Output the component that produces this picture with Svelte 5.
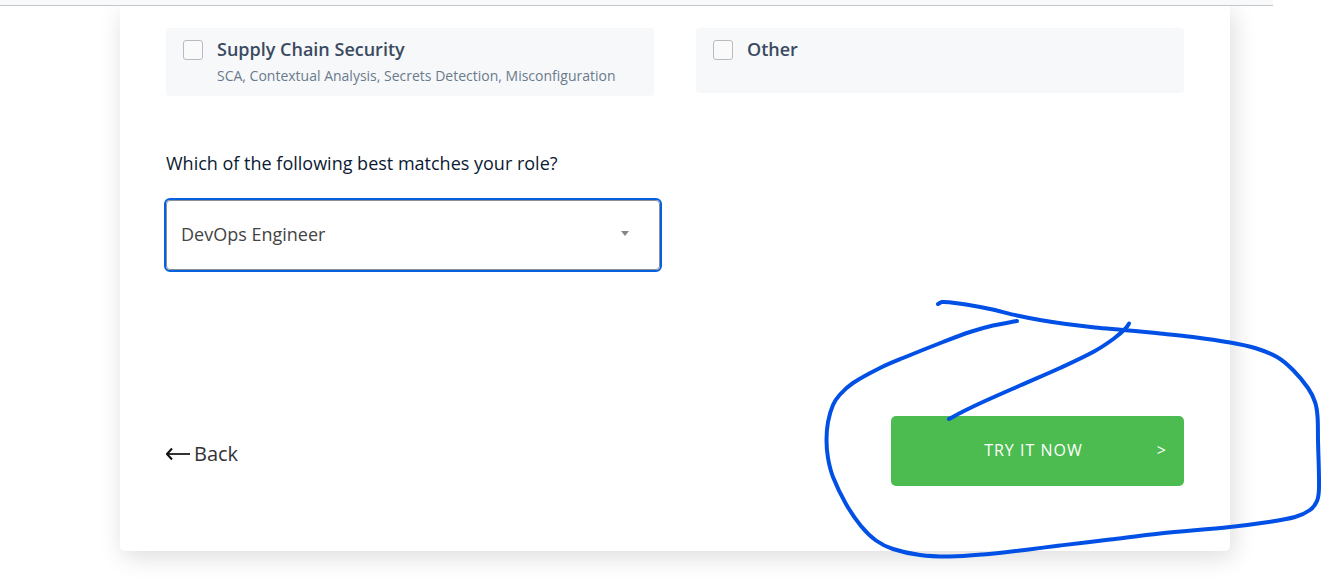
<script>
  let options = $state([
    {
      id: 'supply-chain',
      title: 'Supply Chain Security',
      detail: 'SCA, Contextual Analysis, Secrets Detection, Misconfiguration',
      checked: false
    },
    { id: 'other', title: 'Other', detail: '', checked: false }
  ]);
  const roles = ['DevOps Engineer', 'Developer', 'Security Engineer', 'Architect'];
  let role = $state('DevOps Engineer');

  // Pen strokes, each a list of points joined by a smooth curve
  const strokes = [
    [
      [938, 304], [942, 302], [951, 302.5], [966, 304.5], [990, 309], [1017, 315.5],
      [1040, 320], [1066, 324], [1095, 327.5], [1123, 330], [1160, 333.5], [1193, 337],
      [1230, 342.5], [1255, 348], [1277, 357], [1293, 370], [1308, 388], [1315, 402],
      [1317.5, 416], [1318, 440], [1319, 488], [1317, 501], [1310, 510], [1295, 517],
      [1265, 522.5], [1230, 527], [1160, 533.5], [1110, 539.5], [1060, 545.5],
      [1020, 550.5], [983, 554.5], [950, 556.5], [920, 555], [893, 549], [876, 540.5],
      [861, 526], [846, 504], [833, 477], [828, 458], [826.5, 440], [828, 422],
      [833, 405], [840, 394.5], [853, 383], [880, 368], [903, 358], [943, 342],
      [970, 332], [993, 325.5], [1017, 321]
    ],
    [
      [1129, 323.5], [1126, 328], [1114, 338.5], [1094, 351.5], [1060, 368],
      [1020, 385.5], [985, 401], [963, 411.5], [949, 419]
    ]
  ];

  function curve(points) {
    let d = `M${points[0]}`;
    for (let i = 0; i < points.length - 1; i++) {
      const b = points[i];
      const c = points[i + 1];
      const a = points[i - 1] ?? b;
      const e = points[i + 2] ?? c;
      const span = Math.hypot(c[0] - b[0], c[1] - b[1]) / 3;
      const before = Math.hypot(c[0] - a[0], c[1] - a[1]);
      const after = Math.hypot(e[0] - b[0], e[1] - b[1]);
      const p = [0, 1].map((k) => b[k] + ((c[k] - a[k]) / before) * span);
      const q = [0, 1].map((k) => c[k] - ((e[k] - b[k]) / after) * span);
      d += `C${p} ${q} ${c}`;
    }
    return d;
  }
</script>

<div class="page">
  <div class="topbar"><div class="topbar-fill"></div></div>

  <form class="card" onsubmit={(e) => e.preventDefault()}>
    <div class="options">
      {#each options as option (option.id)}
        <label class="option" for={option.id}>
          <input id={option.id} type="checkbox" bind:checked={option.checked} />
          <span class="text">
            <span class="title">{option.title}</span>
            {#if option.detail}
              <span class="detail">{option.detail}</span>
            {/if}
          </span>
        </label>
      {/each}
    </div>

    <label class="question" for="role">Which of the following best matches your role?</label>
    <div class="select">
      <select id="role" bind:value={role}>
        {#each roles as name}
          <option value={name}>{name}</option>
        {/each}
      </select>
      <svg class="caret" width="8" height="5" viewBox="0 0 8 5" aria-hidden="true">
        <path d="M0 0h8L4 5z" fill="#888" />
      </svg>
    </div>

    <div class="actions">
      <a class="back" href="#back">
        <svg width="24" height="14" viewBox="0 0 24 14" aria-hidden="true">
          <path d="M1 7H24" fill="none" stroke="#333" stroke-width="2" />
          <path d="M6 1.5L1 7L6 12.5" fill="none" stroke="#111" stroke-width="2" />
        </svg>
        <span>Back</span>
      </a>
      <button class="submit" type="submit">
        <span class="submit-label">TRY IT NOW</span>
        <span>&gt;</span>
      </button>
    </div>
  </form>

  <svg class="ink" width="520" height="280" viewBox="810 290 520 280" aria-hidden="true">
    {#each strokes as points}
      <path d={curve(points)} />
    {/each}
  </svg>
</div>

<style>
  :global(body) {
    margin: 0;
    background: #fff;
  }

  .page {
    position: relative;
    overflow: hidden;
    padding-bottom: 32px;
    font-family: 'Open Sans', 'Noto Sans', sans-serif;
  }

  .topbar {
    position: relative;
    z-index: 1;
    padding-right: 49px;
    background: #fff;
  }

  .topbar-fill {
    height: 5px;
    background: #f8f9fb;
    border-bottom: 1px solid #c6c6c8;
  }

  .card {
    margin: 0 92px 0 120px;
    padding: 22px 46px 65px;
    background: #fff;
    border-radius: 0 0 5px 5px;
    box-shadow: 3px 6px 24px rgba(0, 0, 0, 0.14);
  }

  .options {
    display: grid;
    grid-template-columns: 1fr 1fr;
    align-items: start;
    column-gap: 42px;
  }

  .option {
    display: flex;
    box-sizing: border-box;
    min-height: 65px;
    gap: 14px;
    padding: 9px 17px 8px;
    background: #f6f8fa;
    border-radius: 4px;
  }

  .option input {
    appearance: none;
    flex: none;
    box-sizing: border-box;
    width: 20px;
    height: 20px;
    margin: 3px 0 0;
    background: #fafafa;
    border: 1px solid #b9bbbe;
    border-radius: 3px;
  }

  .option input:checked {
    background: #0461dd;
  }

  .text {
    display: flex;
    flex-direction: column;
    gap: 3px;
  }

  .title {
    font-size: 18px;
    font-weight: 600;
    line-height: 24px;
    color: #3b4a60;
  }

  .detail {
    font-size: 14px;
    line-height: 24px;
    color: #6b7a8c;
  }

  .question {
    display: block;
    margin: 55px 0 25px;
    font-size: 18px;
    line-height: 24px;
    color: #0b1a33;
  }

  .select {
    position: relative;
    width: calc(50% - 15px);
  }

  select {
    appearance: none;
    display: block;
    box-sizing: border-box;
    width: 100%;
    height: 70px;
    padding: 0 48px 2px 14px;
    font: 18px 'Open Sans', 'Noto Sans', sans-serif;
    color: #444;
    background: #fff;
    border: 1px solid #8c8f94;
    border-radius: 4px;
    outline: 2px solid #0461dd;
  }

  .caret {
    position: absolute;
    top: 31px;
    right: 31px;
    pointer-events: none;
  }

  .actions {
    display: flex;
    justify-content: space-between;
    align-items: center;
    margin-top: 146px;
  }

  .back {
    display: flex;
    align-items: center;
    gap: 4px;
    padding-top: 6px;
    font-size: 20px;
    line-height: 28px;
    color: #333;
    text-decoration: none;
  }

  .submit {
    display: flex;
    align-items: center;
    box-sizing: border-box;
    width: 293px;
    height: 70px;
    padding: 0 17px 2px 19px;
    font: 16px 'Open Sans', 'Noto Sans', sans-serif;
    letter-spacing: 1px;
    color: #fff;
    background: #4cbb50;
    border: 0;
    border-radius: 5px;
  }

  .submit-label {
    flex: 1;
    text-align: center;
  }

  .ink {
    position: absolute;
    top: 290px;
    right: -8px;
    pointer-events: none;
  }

  .ink path {
    fill: none;
    stroke: #0050e6;
    stroke-width: 4;
    stroke-linecap: round;
    stroke-linejoin: round;
  }
</style>
